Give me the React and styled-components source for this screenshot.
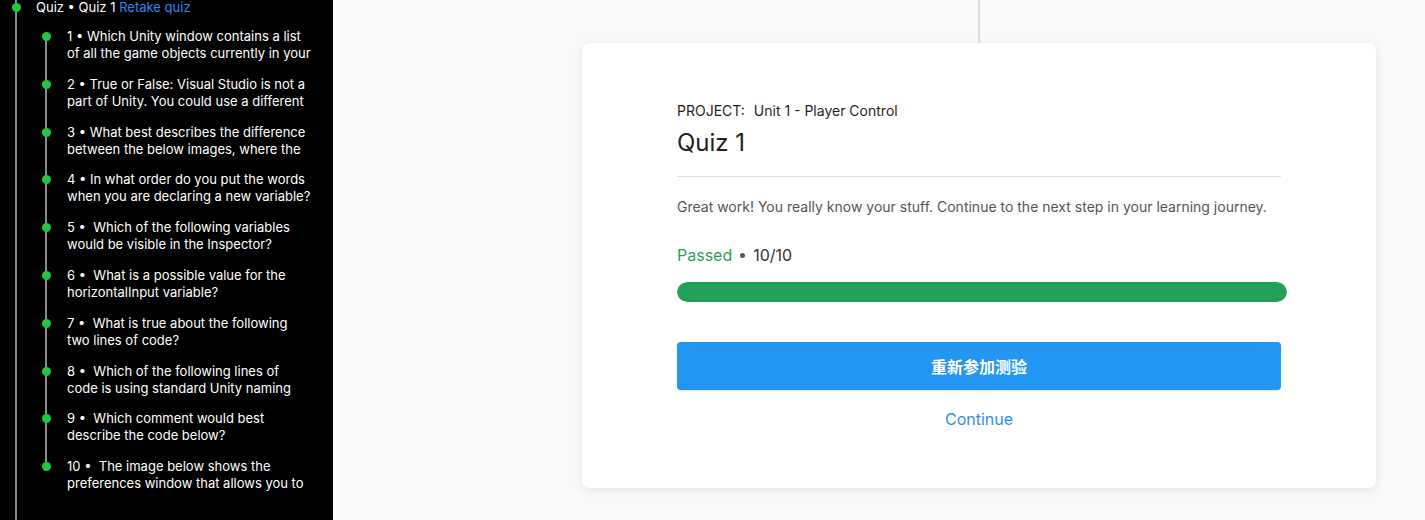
import React from "react";
import styled, { createGlobalStyle } from "styled-components";

const GlobalStyle = createGlobalStyle`
  html, body {
    margin: 0;
    padding: 0;
    height: 100%;
  }
  body {
    font-family: Inter, "Noto Sans", "Noto Sans CJK SC", sans-serif;
    background: #f9f9f9;
  }
  * {
    box-sizing: border-box;
  }
`;

const Page = styled.div`
  display: flex;
  height: 100vh;
  overflow: hidden;
`;

const Sidebar = styled.aside`
  flex: 0 0 333px;
  background: #000;
  color: #fff;
  position: relative;
  font-size: 13px;

  &::before {
    content: "";
    position: absolute;
    left: 15px;
    top: 0;
    bottom: 0;
    width: 2px;
    background: #8a8a8a;
  }
`;

const Dot = styled.span`
  position: absolute;
  width: 9px;
  height: 9px;
  border-radius: 50%;
  background: #22c73f;
  left: ${(p) => p.$left}px;
  top: ${(p) => p.$top}px;
`;

const Header = styled.div`
  position: relative;
  padding-left: 36px;
  line-height: 14px;
  white-space: nowrap;
`;

const RetakeLink = styled.a`
  color: #2e86f0;
  text-decoration: none;
`;

const Steps = styled.ol`
  list-style: none;
  margin: 14px 0 0 45px;
  padding: 0;
  position: relative;
  display: flex;
  flex-direction: column;
  gap: 13.8px;

  &::before {
    content: "";
    position: absolute;
    left: 0;
    top: 9px;
    bottom: 25px;
    width: 2px;
    background: #8a8a8a;
  }
`;

const Step = styled.li`
  position: relative;
  padding: 0 21px 0 22px;
`;

const StepText = styled.div`
  line-height: 17px;
  height: 34px;
  overflow: hidden;
`;

const Main = styled.main`
  flex: 1;
  display: flex;
  flex-direction: column;
  align-items: center;
  padding: 0 49px 0 249px;
  background: #f9f9f9;
`;

const Connector = styled.div`
  width: 2px;
  height: 43px;
  background: #dcdcdc;
  flex-shrink: 0;
`;

const Card = styled.section`
  width: 794px;
  background: #fff;
  border-radius: 7px;
  box-shadow: 0 2px 10px rgba(0, 0, 0, 0.09);
  padding: 58px 95px 57px;
  display: flex;
  flex-direction: column;
`;

const Project = styled.div`
  font-size: 14px;
  line-height: 20px;
  color: #1f1f1f;
  white-space: nowrap;
`;

const ProjectName = styled.span`
  margin-left: 9px;
`;

const Title = styled.h1`
  margin: 6px 0 0;
  font-size: 24px;
  line-height: 32px;
  font-weight: 400;
  color: #222;
`;

const Divider = styled.hr`
  margin: 17px 0 0;
  border: none;
  height: 1px;
  background: #e0e0e0;
`;

const Message = styled.p`
  margin: 20px 0 0;
  font-size: 14px;
  line-height: 20px;
  color: #555;
`;

const Score = styled.div`
  margin-top: 26px;
  font-size: 16px;
  line-height: 24px;
  color: #333;
  display: flex;
  align-items: center;
  gap: 8px;
`;

const Passed = styled.span`
  color: #2f9e5c;
`;

const Bullet = styled.span`
  width: 5px;
  height: 5px;
  border-radius: 50%;
  background: #555;
`;

const Progress = styled.div`
  margin: 15px -6px 0 0;
  height: 20px;
  border-radius: 10px;
  background: #e6e6e6;
  overflow: hidden;
`;

const ProgressFill = styled.div`
  height: 100%;
  background: #23a058;
  border-radius: 10px;
`;

const RetakeButton = styled.button`
  margin-top: 40px;
  height: 48px;
  border: none;
  border-radius: 4px;
  background: #2196f3;
  color: #fff;
  font-family: Inter, "Noto Sans CJK SC", sans-serif;
  font-size: 16px;
  font-weight: 700;
  box-shadow: 0 1px 2px rgba(0, 0, 0, 0.12);
  cursor: pointer;
`;

const ContinueLink = styled.a`
  margin-top: 17px;
  align-self: center;
  font-size: 16px;
  line-height: 24px;
  color: #2e8fe8;
  text-decoration: none;
  cursor: pointer;
`;

const questions = [
  "1 • Which Unity window contains a list of all the game objects currently in your scene?",
  "2 • True or False: Visual Studio is not a part of Unity. You could use a different code editor to edit your C# scripts if you wanted to.",
  "3 • What best describes the difference between the below images, where the car is in the second image is further along the road?",
  "4 • In what order do you put the words when you are declaring a new variable?",
  "5 •\u00a0 Which of the following variables would be visible in the Inspector?",
  "6 •\u00a0 What is a possible value for the horizontalInput variable?",
  "7 •\u00a0 What is true about the following two lines of code?",
  "8 •\u00a0 Which of the following lines of code is using standard Unity naming conventions?",
  "9 •\u00a0 Which comment would best describe the code below?",
  "10 •\u00a0 The image below shows the preferences window that allows you to change which script editor is used.",
];

export default function App() {
  const score = 10;
  const total = 10;

  return (
    <>
      <GlobalStyle />
      <Page>
        <Sidebar>
          <Header>
            <Dot $left={12} $top={3} />
            Quiz • Quiz 1 <RetakeLink>Retake quiz</RetakeLink>
          </Header>
          <Steps>
            {questions.map((q) => (
              <Step key={q}>
                <Dot $left={-3} $top={4} />
                <StepText>{q}</StepText>
              </Step>
            ))}
          </Steps>
        </Sidebar>
        <Main>
          <Connector />
          <Card>
            <Project>
              PROJECT:<ProjectName>Unit 1 - Player Control</ProjectName>
            </Project>
            <Title>Quiz 1</Title>
            <Divider />
            <Message>
              Great work! You really know your stuff. Continue to the next step in your learning journey.
            </Message>
            <Score>
              <Passed>Passed</Passed>
              <Bullet />
              <span>
                {score}/{total}
              </span>
            </Score>
            <Progress>
              <ProgressFill style={{ width: `${(score / total) * 100}%` }} />
            </Progress>
            <RetakeButton>重新参加测验</RetakeButton>
            <ContinueLink>Continue</ContinueLink>
          </Card>
        </Main>
      </Page>
    </>
  );
}
